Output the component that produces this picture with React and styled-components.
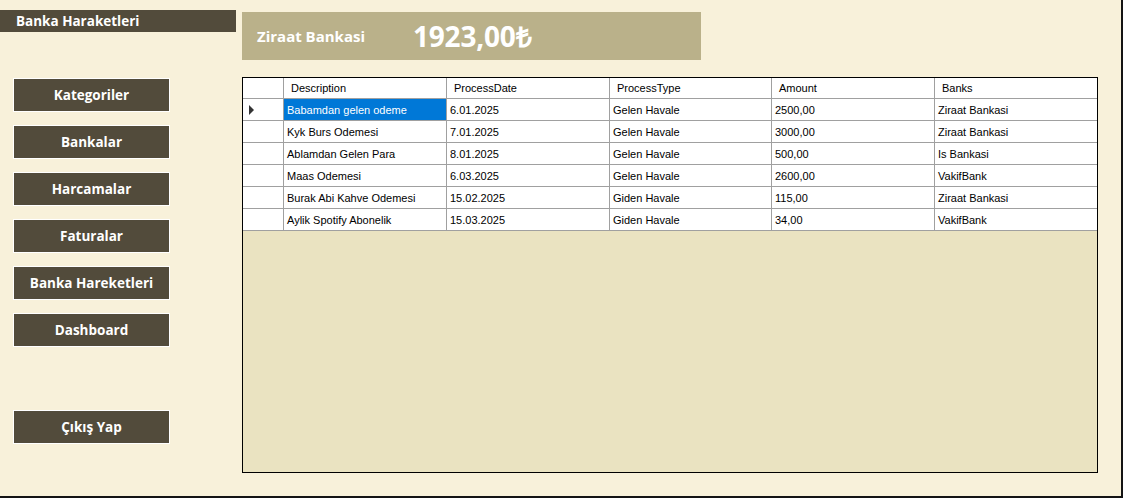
import React from 'react';
import styled, { createGlobalStyle } from 'styled-components';

const GlobalStyle = createGlobalStyle`
  body {
    margin: 0;
    background: #f8f1da;
  }
  * {
    box-sizing: border-box;
  }
`;

const Window = styled.div`
  width: 1123px;
  height: 498px;
  display: flex;
  background: #f8f1da;
  border-right: 2px solid #141414;
  border-bottom: 2px solid #141414;
  font-family: 'Open Sans', 'Liberation Sans', sans-serif;
`;

const Sidebar = styled.div`
  width: 242px;
  flex-shrink: 0;
  display: flex;
  flex-direction: column;
`;

const TitleBar = styled.div`
  margin-top: 10px;
  width: 236px;
  height: 22px;
  line-height: 22px;
  padding-left: 16px;
  background: #524b3b;
  color: #fff;
  font-weight: 700;
  font-size: 13.5px;
`;

const Menu = styled.div`
  margin-top: 46px;
  padding-left: 13px;
  display: flex;
  flex-direction: column;
  gap: 13px;
`;

const MenuButton = styled.button`
  width: 157px;
  height: 34px;
  margin-top: ${(p) => (p.$spaced ? '50px' : '0')};
  border: 1px solid #fff;
  background: #524b3b;
  color: #fff;
  font-family: 'Open Sans', 'Liberation Sans', sans-serif;
  font-weight: 700;
  font-size: 13.5px;
  padding: 0;
  cursor: pointer;
`;

const Main = styled.div`
  display: flex;
  flex-direction: column;
`;

const BankPanel = styled.div`
  margin-top: 12px;
  width: 459px;
  height: 48px;
  background: #bab18a;
  display: flex;
  align-items: center;
  padding-left: 15px;
  color: #fff;
  font-weight: 700;
`;

const BankName = styled.div`
  width: 156px;
  font-size: 15px;
`;

const Balance = styled.div`
  font-size: 28px;
  letter-spacing: -0.2px;
`;

const Grid = styled.div`
  margin-top: 17px;
  width: 856px;
  height: 396px;
  border: 1px solid #000;
  background: #eae3c1;
  font-family: 'Liberation Sans', Arial, sans-serif;
  font-size: 11px;
  color: #000;
`;

const Row = styled.div`
  display: grid;
  grid-template-columns: 41px 163px 163px 162px 163px 162px;
  height: ${(p) => (p.$head ? '21px' : '22px')};
`;

const Cell = styled.div`
  background: ${(p) => (p.$selected ? '#0078d7' : '#fff')};
  color: ${(p) => (p.$selected ? '#fff' : '#000')};
  border-right: 1px solid #a0a0a0;
  border-bottom: 1px solid #a0a0a0;
  padding-left: ${(p) => (p.$head ? '7px' : '3px')};
  display: flex;
  align-items: center;
  white-space: nowrap;
  overflow: hidden;
  &:last-child {
    border-right: none;
  }
`;

const RowHead = styled.div`
  background: #fff;
  border-right: 1px solid #a0a0a0;
  border-bottom: 1px solid #a0a0a0;
  display: flex;
  align-items: center;
  padding-left: 6px;
`;

const Arrow = styled.span`
  width: 0;
  height: 0;
  border-top: 5px solid transparent;
  border-bottom: 5px solid transparent;
  border-left: 5px solid #333;
`;

const columns = ['Description', 'ProcessDate', 'ProcessType', 'Amount', 'Banks'];

const rows = [
  ['Babamdan gelen odeme', '6.01.2025', 'Gelen Havale', '2500,00', 'Ziraat Bankasi'],
  ['Kyk Burs Odemesi', '7.01.2025', 'Gelen Havale', '3000,00', 'Ziraat Bankasi'],
  ['Ablamdan Gelen Para', '8.01.2025', 'Gelen Havale', '500,00', 'Is Bankasi'],
  ['Maas Odemesi', '6.03.2025', 'Gelen Havale', '2600,00', 'VakifBank'],
  ['Burak Abi Kahve Odemesi', '15.02.2025', 'Giden Havale', '115,00', 'Ziraat Bankasi'],
  ['Aylik Spotify Abonelik', '15.03.2025', 'Giden Havale', '34,00', 'VakifBank'],
];

const menu = ['Kategoriler', 'Bankalar', 'Harcamalar', 'Faturalar', 'Banka Hareketleri', 'Dashboard'];

export default function App() {
  return (
    <Window>
      <GlobalStyle />
      <Sidebar>
        <TitleBar>Banka Haraketleri</TitleBar>
        <Menu>
          {menu.map((m) => (
            <MenuButton key={m}>{m}</MenuButton>
          ))}
          <MenuButton $spaced>Çıkış Yap</MenuButton>
        </Menu>
      </Sidebar>
      <Main>
        <BankPanel>
          <BankName>Ziraat Bankasi</BankName>
          <Balance>1923,00₺</Balance>
        </BankPanel>
        <Grid>
          <Row $head>
            <RowHead />
            {columns.map((c) => (
              <Cell $head key={c}>
                {c}
              </Cell>
            ))}
          </Row>
          {rows.map((r, i) => (
            <Row key={i}>
              <RowHead>{i === 0 && <Arrow />}</RowHead>
              {r.map((v, j) => (
                <Cell key={j} $selected={i === 0 && j === 0}>
                  {v}
                </Cell>
              ))}
            </Row>
          ))}
        </Grid>
      </Main>
    </Window>
  );
}
